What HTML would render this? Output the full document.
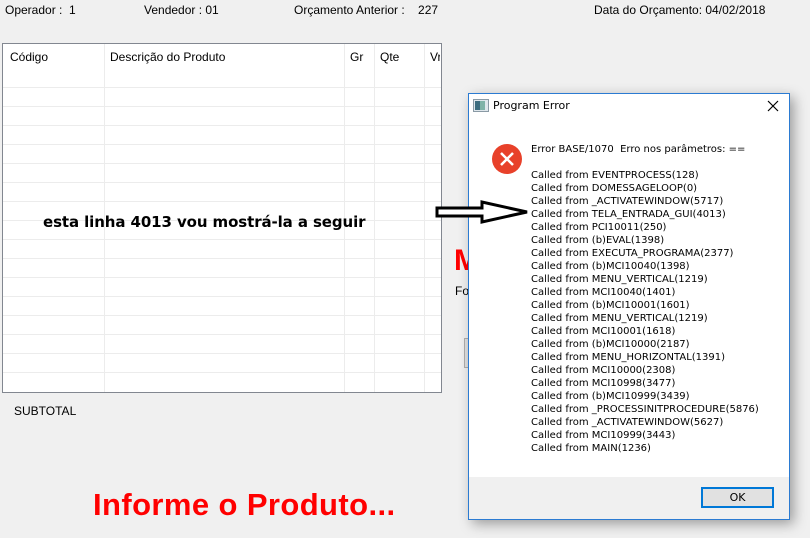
<!DOCTYPE html>
<html><head><meta charset="utf-8"><style>
*{margin:0;padding:0;box-sizing:border-box}
body{width:810px;height:538px;background:#f0f0f0;position:relative;overflow:hidden;font-family:"Liberation Sans",Arial,sans-serif;font-size:12px;color:#000}
.a{position:absolute;white-space:nowrap}
#tbl{position:absolute;left:2px;top:43px;width:440px;height:350px;background:#fff;border:1px solid #828790}
.h{position:absolute;background:#ececec;height:1px;left:0;right:0}
.v{position:absolute;background:#ececec;width:1px;top:0;bottom:0}
#dlg{position:absolute;left:468px;top:93px;width:322px;height:427px;background:#fff;border:1px solid #2b7bd2;box-shadow:4px 4px 12px rgba(0,0,0,.35)}
#foot{position:absolute;left:0;right:0;bottom:0;height:42px;background:#f0f0f0}
#ok{position:absolute;left:232px;top:393px;width:73px;height:21px;border:2px solid #0078d7;background:#e1e1e1;text-align:center;font-size:11px;line-height:17px;font-family:"DejaVu Sans",sans-serif}
.msg{position:absolute;left:62px;font-family:"DejaVu Sans",sans-serif;font-size:10px;line-height:13px;color:#000}
</style></head><body>
<div class="a" style="left:5px;top:3px">Operador :&nbsp; 1</div>
<div class="a" style="left:144px;top:3px">Vendedor : 01</div>
<div class="a" style="left:294px;top:3px">Orçamento Anterior :&nbsp;&nbsp;&nbsp; 227</div>
<div class="a" style="left:594px;top:3px">Data do Orçamento: 04/02/2018</div>

<div id="tbl">
<div class="v" style="left:101px"></div><div class="v" style="left:341px"></div><div class="v" style="left:371px"></div><div class="v" style="left:421px"></div>
<div class="a" style="left:7px;top:6px">Código</div>
<div class="a" style="left:107px;top:6px">Descrição do Produto</div>
<div class="a" style="left:347px;top:6px">Gr</div>
<div class="a" style="left:377px;top:6px">Qte</div>
<div class="a" style="left:427px;top:6px;width:10px;overflow:hidden">Vr</div>
<div class="h" style="top:43px"></div><div class="h" style="top:62px"></div><div class="h" style="top:81px"></div><div class="h" style="top:100px"></div><div class="h" style="top:119px"></div><div class="h" style="top:138px"></div><div class="h" style="top:157px"></div><div class="h" style="top:176px"></div><div class="h" style="top:195px"></div><div class="h" style="top:214px"></div><div class="h" style="top:233px"></div><div class="h" style="top:252px"></div><div class="h" style="top:271px"></div><div class="h" style="top:290px"></div><div class="h" style="top:309px"></div><div class="h" style="top:328px"></div>
<div class="a" style="left:40px;top:169px;font-family:'DejaVu Sans',sans-serif;font-weight:bold;font-size:15px;letter-spacing:-0.1px">esta linha 4013 vou mostrá-la a seguir</div>
</div>
<div class="a" style="left:14px;top:404px">SUBTOTAL</div>
<div class="a" style="left:454px;top:244px;color:#f00;font-weight:bold;font-size:30px">M</div>
<div class="a" style="left:455px;top:284px">Fo</div>
<div style="position:absolute;left:464px;top:338px;width:8px;height:30px;border:1px solid #adadad;background:#e1e1e1"></div>
<div class="a" style="left:93px;top:487px;color:#f00;font-weight:bold;font-size:31px;letter-spacing:0.4px">Informe o Produto...</div>

<div id="dlg">
<svg style="position:absolute;left:4px;top:5px" width="16" height="14"><rect x="0.5" y="0.5" width="15" height="12" fill="#dfe7ec" stroke="#8a9aa5"/><rect x="2" y="2" width="5" height="9" fill="#3d6d7f"/><rect x="7" y="2" width="5" height="9" fill="#7fb3a8"/></svg>
<div class="a" style="left:24px;top:5px;font-family:'DejaVu Sans',sans-serif;font-size:11px">Program Error</div>
<svg style="position:absolute;left:298px;top:6px" width="12" height="12"><path d="M1 1L11 11M11 1L1 11" stroke="#000" stroke-width="1.2"/></svg>
<svg style="position:absolute;left:22px;top:49px" width="32" height="32"><circle cx="16" cy="16" r="15" fill="#e8412a"/><path d="M10 10L22 22M22 10L10 22" stroke="#fff" stroke-width="2.5"/></svg>
<div class="msg" style="top:49px">Error BASE/1070&nbsp; Erro nos parâmetros: ==</div>
<div class="msg" style="top:75px">Called from EVENTPROCESS(128)<br>Called from DOMESSAGELOOP(0)<br>Called from _ACTIVATEWINDOW(5717)<br>Called from TELA_ENTRADA_GUI(4013)<br>Called from PCI10011(250)<br>Called from (b)EVAL(1398)<br>Called from EXECUTA_PROGRAMA(2377)<br>Called from (b)MCI10040(1398)<br>Called from MENU_VERTICAL(1219)<br>Called from MCI10040(1401)<br>Called from (b)MCI10001(1601)<br>Called from MENU_VERTICAL(1219)<br>Called from MCI10001(1618)<br>Called from (b)MCI10000(2187)<br>Called from MENU_HORIZONTAL(1391)<br>Called from MCI10000(2308)<br>Called from MCI10998(3477)<br>Called from (b)MCI10999(3439)<br>Called from _PROCESSINITPROCEDURE(5876)<br>Called from _ACTIVATEWINDOW(5627)<br>Called from MCI10999(3443)<br>Called from MAIN(1236)</div>
<div id="foot"></div>
<div id="ok">OK</div>
</div>

<svg style="position:absolute;left:434px;top:198px;z-index:5" width="100" height="30"><path d="M3 10 H48 V4 L93 14 L48 24 V18 H3 Z" fill="#fff" stroke="#000" stroke-width="3"/></svg>
</body></html>
